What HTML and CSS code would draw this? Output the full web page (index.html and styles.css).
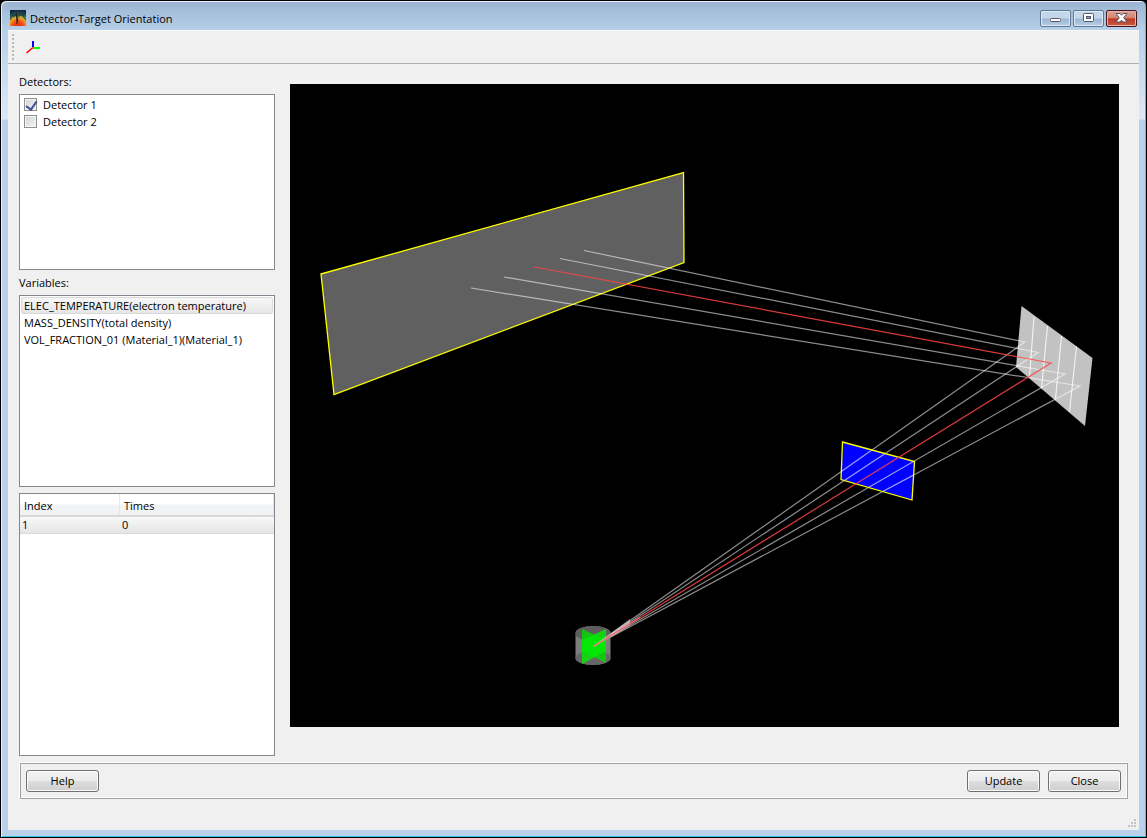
FILE: index.html
```html
<!DOCTYPE html>
<html lang="en">
<head>
<meta charset="utf-8">
<title>Detector-Target Orientation</title>
<link rel="stylesheet" href="styles.css">
</head>
<body>
<div class="window">
  <header class="titlebar">
    <svg class="app-icon" width="16" height="16" viewBox="0 0 16 16" aria-hidden="true">
      <defs>
        <radialGradient id="heat" gradientUnits="userSpaceOnUse" cx="8" cy="17" r="17">
          <stop offset="0" stop-color="#e02808"/>
          <stop offset="0.35" stop-color="#f2501a"/>
          <stop offset="0.52" stop-color="#f29a20"/>
          <stop offset="0.62" stop-color="#a8a838"/>
          <stop offset="0.74" stop-color="#2c6650"/>
          <stop offset="0.88" stop-color="#173d50"/>
          <stop offset="1" stop-color="#12263e"/>
        </radialGradient>
      </defs>
      <rect width="16" height="16" fill="url(#heat)"/>
      <path d="M0 10L1.500 7L3 5L4 7L5 4L6 6L6.500 3L7.500 12L8 5L9 6.500L10 3L11.500 6L12.500 3.500L13.500 7L16 10" fill="none" stroke="#13283a" stroke-width=".9" opacity=".8"/>
      <path d="M6.500 3L7 14" stroke="#2a2018" stroke-width="1"/>
    </svg>
    <h1 class="title">Detector-Target Orientation</h1>
    <div class="window-buttons">
      <button class="win-btn" type="button" aria-label="Minimize">
        <svg width="13" height="10" viewBox="0 0 13 10"><rect x="1.500" y="5.500" width="10" height="3" rx="1" fill="#fff" stroke="#535666"/></svg>
      </button>
      <button class="win-btn" type="button" aria-label="Maximize">
        <svg width="13" height="10" viewBox="0 0 13 10"><rect x="1.500" y=".5" width="10" height="8" rx="1" fill="#fff" stroke="#535666"/><rect x="4.500" y="3.500" width="4" height="2" fill="#8fabcb" stroke="#535666"/></svg>
      </button>
      <button class="win-btn win-close" type="button" aria-label="Close window">
        <svg width="13" height="10" viewBox="0 0 13 10"><path d="M1 .5H5L6.500 2.200L8 .5H12L8.700 4.700L12 9H8L6.500 7.200L5 9H1L4.300 4.700Z" fill="#fff" stroke="#535666"/></svg>
      </button>
    </div>
  </header>

  <div class="client">
    <div class="toolbar">
      <span class="grip"></span>
      <button class="tool" type="button" aria-label="Show axes">
        <svg width="14" height="14" viewBox="0 0 14 14">
          <path d="M7 7.500L0.500 13" stroke="#f00" stroke-width="1.600"/>
          <rect x="6" y="1" width="2" height="6" fill="#00f"/>
          <rect x="7" y="7" width="7" height="2" fill="#0f0"/>
        </svg>
      </button>
    </div>

    <main class="main">
      <section class="side">
        <h2 class="label" id="det-label">Detectors:</h2>
        <ul class="list list-detectors" aria-labelledby="det-label">
          <li><label class="item check"><input type="checkbox" checked>Detector 1</label></li>
          <li><label class="item check"><input type="checkbox">Detector 2</label></li>
        </ul>
        <h2 class="label label-next" id="var-label">Variables:</h2>
        <ul class="list list-variables" role="listbox" aria-labelledby="var-label">
          <li class="item selected" role="option" aria-selected="true">ELEC_TEMPERATURE(electron temperature)</li>
          <li class="item" role="option" aria-selected="false">MASS_DENSITY(total density)</li>
          <li class="item" role="option" aria-selected="false">VOL_FRACTION_01 (Material_1)(Material_1)</li>
        </ul>
        <div class="list list-times">
          <table class="times">
            <thead><tr><th class="col-index">Index</th><th>Times</th></tr></thead>
            <tbody><tr><td>1</td><td>0</td></tr></tbody>
          </table>
        </div>
      </section>

      <div class="view">
        <svg class="scene" viewBox="290 84 829 643" role="img" aria-label="Detector and target geometry">
          <polygon points="321,274 683.500,172.500 684,262.500 334,394.500" fill="#606060" stroke="#ff0" stroke-width="1.300"/>
          <polygon points="1021.500,306 1092.500,358 1085,426 1016,367" fill="#c2c2c2"/>
          <path d="M1034 317L1029.500 377M1047.500 326L1041.500 388M1061.500 336L1055.500 399M1076.500 346.500L1069.500 412" stroke="#f4f4f4" stroke-width="1.100" fill="none"/>
          <g fill="none" stroke="#fff" stroke-opacity=".55" stroke-width="1.200">
            <path d="M584 250.500L1025 342L594 646"/>
            <path d="M560 258.500L1038 352.500L594 646"/>
            <path d="M504 277L1065 374L594 646"/>
            <path d="M471 288L1080 386L594 646"/>
          </g>
          <clipPath id="slit"><polygon points="842.500,442 914.500,461.500 912,500 841,479.500"/></clipPath>
          <polygon points="842.500,442 914.500,461.500 912,500 841,479.500" fill="#00f"/>
          <g clip-path="url(#slit)" fill="none" stroke="#9c9cff" stroke-width="1.200">
            <path d="M1025 342L594 646M1038 352.500L594 646M1065 374L594 646M1080 386L594 646"/>
          </g>
          <polygon points="842.500,442 914.500,461.500 912,500 841,479.500" fill="none" stroke="#ff0" stroke-width="1.300"/>
          <path d="M534 267L1051 363L594 646" fill="none" stroke="#f44" stroke-opacity=".85" stroke-width="1.200"/>
          <path d="M575.500 633A17.500 7 0 0 1 610.500 633V658A17.500 7 0 0 1 575.500 658Z" fill="#7d7d7d"/>
          <ellipse cx="593" cy="633.500" rx="17.500" ry="7.500" fill="#5e5e5e"/>
          <ellipse cx="593" cy="658" rx="17.500" ry="7" fill="#666"/>
          <path d="M582 629L606 640V663L582 651Z" fill="#0d0" opacity=".8"/>
          <path d="M606 629L582 640V664L606 651Z" fill="#0e0" opacity=".8"/>
          <path d="M593 646L630 619L630 625L594 647Z" fill="#ddd" opacity=".6"/>
          <path d="M594 646L640 617.500" stroke="#f66" stroke-width="1.200"/>
        </svg>
      </div>
    </main>

    <footer class="buttons">
      <button class="btn btn-help" type="button">Help</button>
      <button class="btn" type="button">Update</button>
      <button class="btn" type="button">Close</button>
    </footer>

    <svg class="size-grip" width="8" height="8" viewBox="0 0 8 8" aria-hidden="true">
      <path d="M6 0h2v2h-2zM6 3h2v2h-2zM3 3h2v2h-2zM6 6h2v2h-2zM3 6h2v2h-2zM0 6h2v2h-2z" fill="#c3c3c3"/>
    </svg>
  </div>
</div>
</body>
</html>
```
FILE: styles.css
```css
* {
  box-sizing: border-box;
}

body {
  margin: 0;
  background: #000;
  color: #000;
  font: 11px/17px "Open Sans", "Noto Sans", sans-serif;
}

h1,
h2,
ul {
  margin: 0;
  padding: 0;
  font-size: inherit;
  font-weight: normal;
  list-style: none;
}

button,
input {
  margin: 0;
  font: inherit;
  color: inherit;
}

.window {
  display: flex;
  flex-direction: column;
  min-height: 100vh;
  padding: 0 7px 7px;
  border: 1px solid #000;
  border-radius: 6px 6px 0 0;
  box-shadow: inset 1px 1px 0 #e9f2fb, inset -1px -1px 0 #35c8e8;
  background: linear-gradient(#9ab4d1, #b7cfe8 29px, #dde8f6 118px, #b9d1ea 119px);
}

.titlebar {
  display: flex;
  align-items: center;
  height: 29px;
  padding: 5px 2px 0;
}

.title {
  flex: 1;
  margin-left: 4px;
}

.window-buttons {
  display: flex;
  gap: 2px;
}

.win-btn {
  display: flex;
  align-items: center;
  justify-content: center;
  width: 31px;
  height: 17px;
  padding: 0;
  border: 1px solid #5c7693;
  border-radius: 2px;
  background: linear-gradient(#c3d6ea 48%, #9db8d4 52%, #b5cde6);
  box-shadow: inset 0 0 0 1px #dce9f6;
}

.win-close {
  border-color: #43141b;
  background: linear-gradient(#e2a194, #d38473 46%, #bd3a24 52%, #c85a40);
  box-shadow: inset 0 0 0 1px #e9b5aa;
}

.client {
  position: relative;
  display: flex;
  flex: 1;
  flex-direction: column;
  background: #f0f0f0;
}

.toolbar {
  display: flex;
  align-items: center;
  height: 34px;
  padding-left: 4px;
  border-top: 1px solid #fafafa;
  border-bottom: 1px solid #b0b0b0;
}

.grip {
  width: 2px;
  height: 26px;
  background: repeating-linear-gradient(#b8b8b8 0 2px, transparent 2px 4px);
}

.tool {
  display: flex;
  margin-left: 12px;
  padding: 0;
  border: 0;
  background: none;
}

.main {
  display: flex;
  flex: 1;
  gap: 15px;
  padding: 0 20px 0 11px;
}

.side {
  display: flex;
  flex-direction: column;
  width: 256px;
  padding-top: 9px;
}

.label {
  height: 21px;
  line-height: 18px;
}

.label-next {
  margin-top: 4px;
}

.list {
  padding: 1px;
  border: 1px solid #828790;
  background: #fff;
}

.list-detectors {
  flex: 176 1 176px;
}

.list-variables {
  flex: 192 1 192px;
}

.list-times {
  flex: 263 1 263px;
  margin-top: 6px;
  padding: 0;
}

.item {
  height: 17px;
  padding: 0 3px;
  line-height: 17px;
  white-space: nowrap;
}

.selected {
  border-radius: 3px;
  background: linear-gradient(#f8f8f8, #e5e5e5);
  box-shadow: inset 0 0 0 1px #d9d9d9;
}

.check {
  display: flex;
  align-items: center;
  gap: 6px;
}

.check input {
  appearance: none;
  width: 13px;
  height: 13px;
  border: 1px solid #8e8f8f;
  background: linear-gradient(135deg, #cfd2d6, #f6f6f6);
  box-shadow: inset 0 0 0 1px #f4f4f4;
}

.check input:checked::after {
  content: "";
  display: block;
  width: 5px;
  height: 9px;
  margin-left: 3px;
  border: solid #3f5199;
  border-width: 0 2px 2px 0;
  transform: rotate(35deg);
}

.times {
  width: 100%;
  border-collapse: separate;
  border-spacing: 0;
  table-layout: fixed;
}

.times th,
.times td {
  padding: 0 2px;
  font-weight: normal;
  text-align: left;
}

.times th {
  height: 22px;
  padding: 2px 4px 0;
  border-right: 1px solid #e3e8ee;
  border-bottom: 1px solid #d5d5d5;
  background: linear-gradient(#fff 45%, #f3f4f6 55%, #f1f2f4);
}

.times .col-index {
  width: 100px;
}

.times td {
  height: 18px;
  border: solid #d9d9d9;
  border-width: 1px 0;
  background: linear-gradient(#f8f8f8, #e5e5e5);
  line-height: 16px;
}

.view {
  flex: 1;
  display: flex;
  min-width: 0;
  margin: 20px 0 29px;
  background: #000;
}

.scene {
  flex: 1;
  width: 100%;
  min-width: 0;
}

.buttons {
  display: flex;
  align-items: center;
  gap: 8px;
  height: 36px;
  margin: 7px 11px 31px 12px;
  padding: 0 6px 0 5px;
  border: 1px solid #a0a0a0;
  box-shadow: -1px -1px 0 #fff, inset -1px -1px 0 #fff;
}

.btn {
  width: 73px;
  height: 22px;
  padding: 0;
  border: 1px solid #707070;
  border-radius: 3px;
  background: linear-gradient(#f2f2f2, #ebebeb 48%, #dddddd 52%, #cfcfcf);
  box-shadow: inset 0 0 0 1px #fafafa;
  line-height: 20px;
}

.btn-help {
  margin-right: auto;
}

.size-grip {
  position: absolute;
  right: 3px;
  bottom: 3px;
}
```
